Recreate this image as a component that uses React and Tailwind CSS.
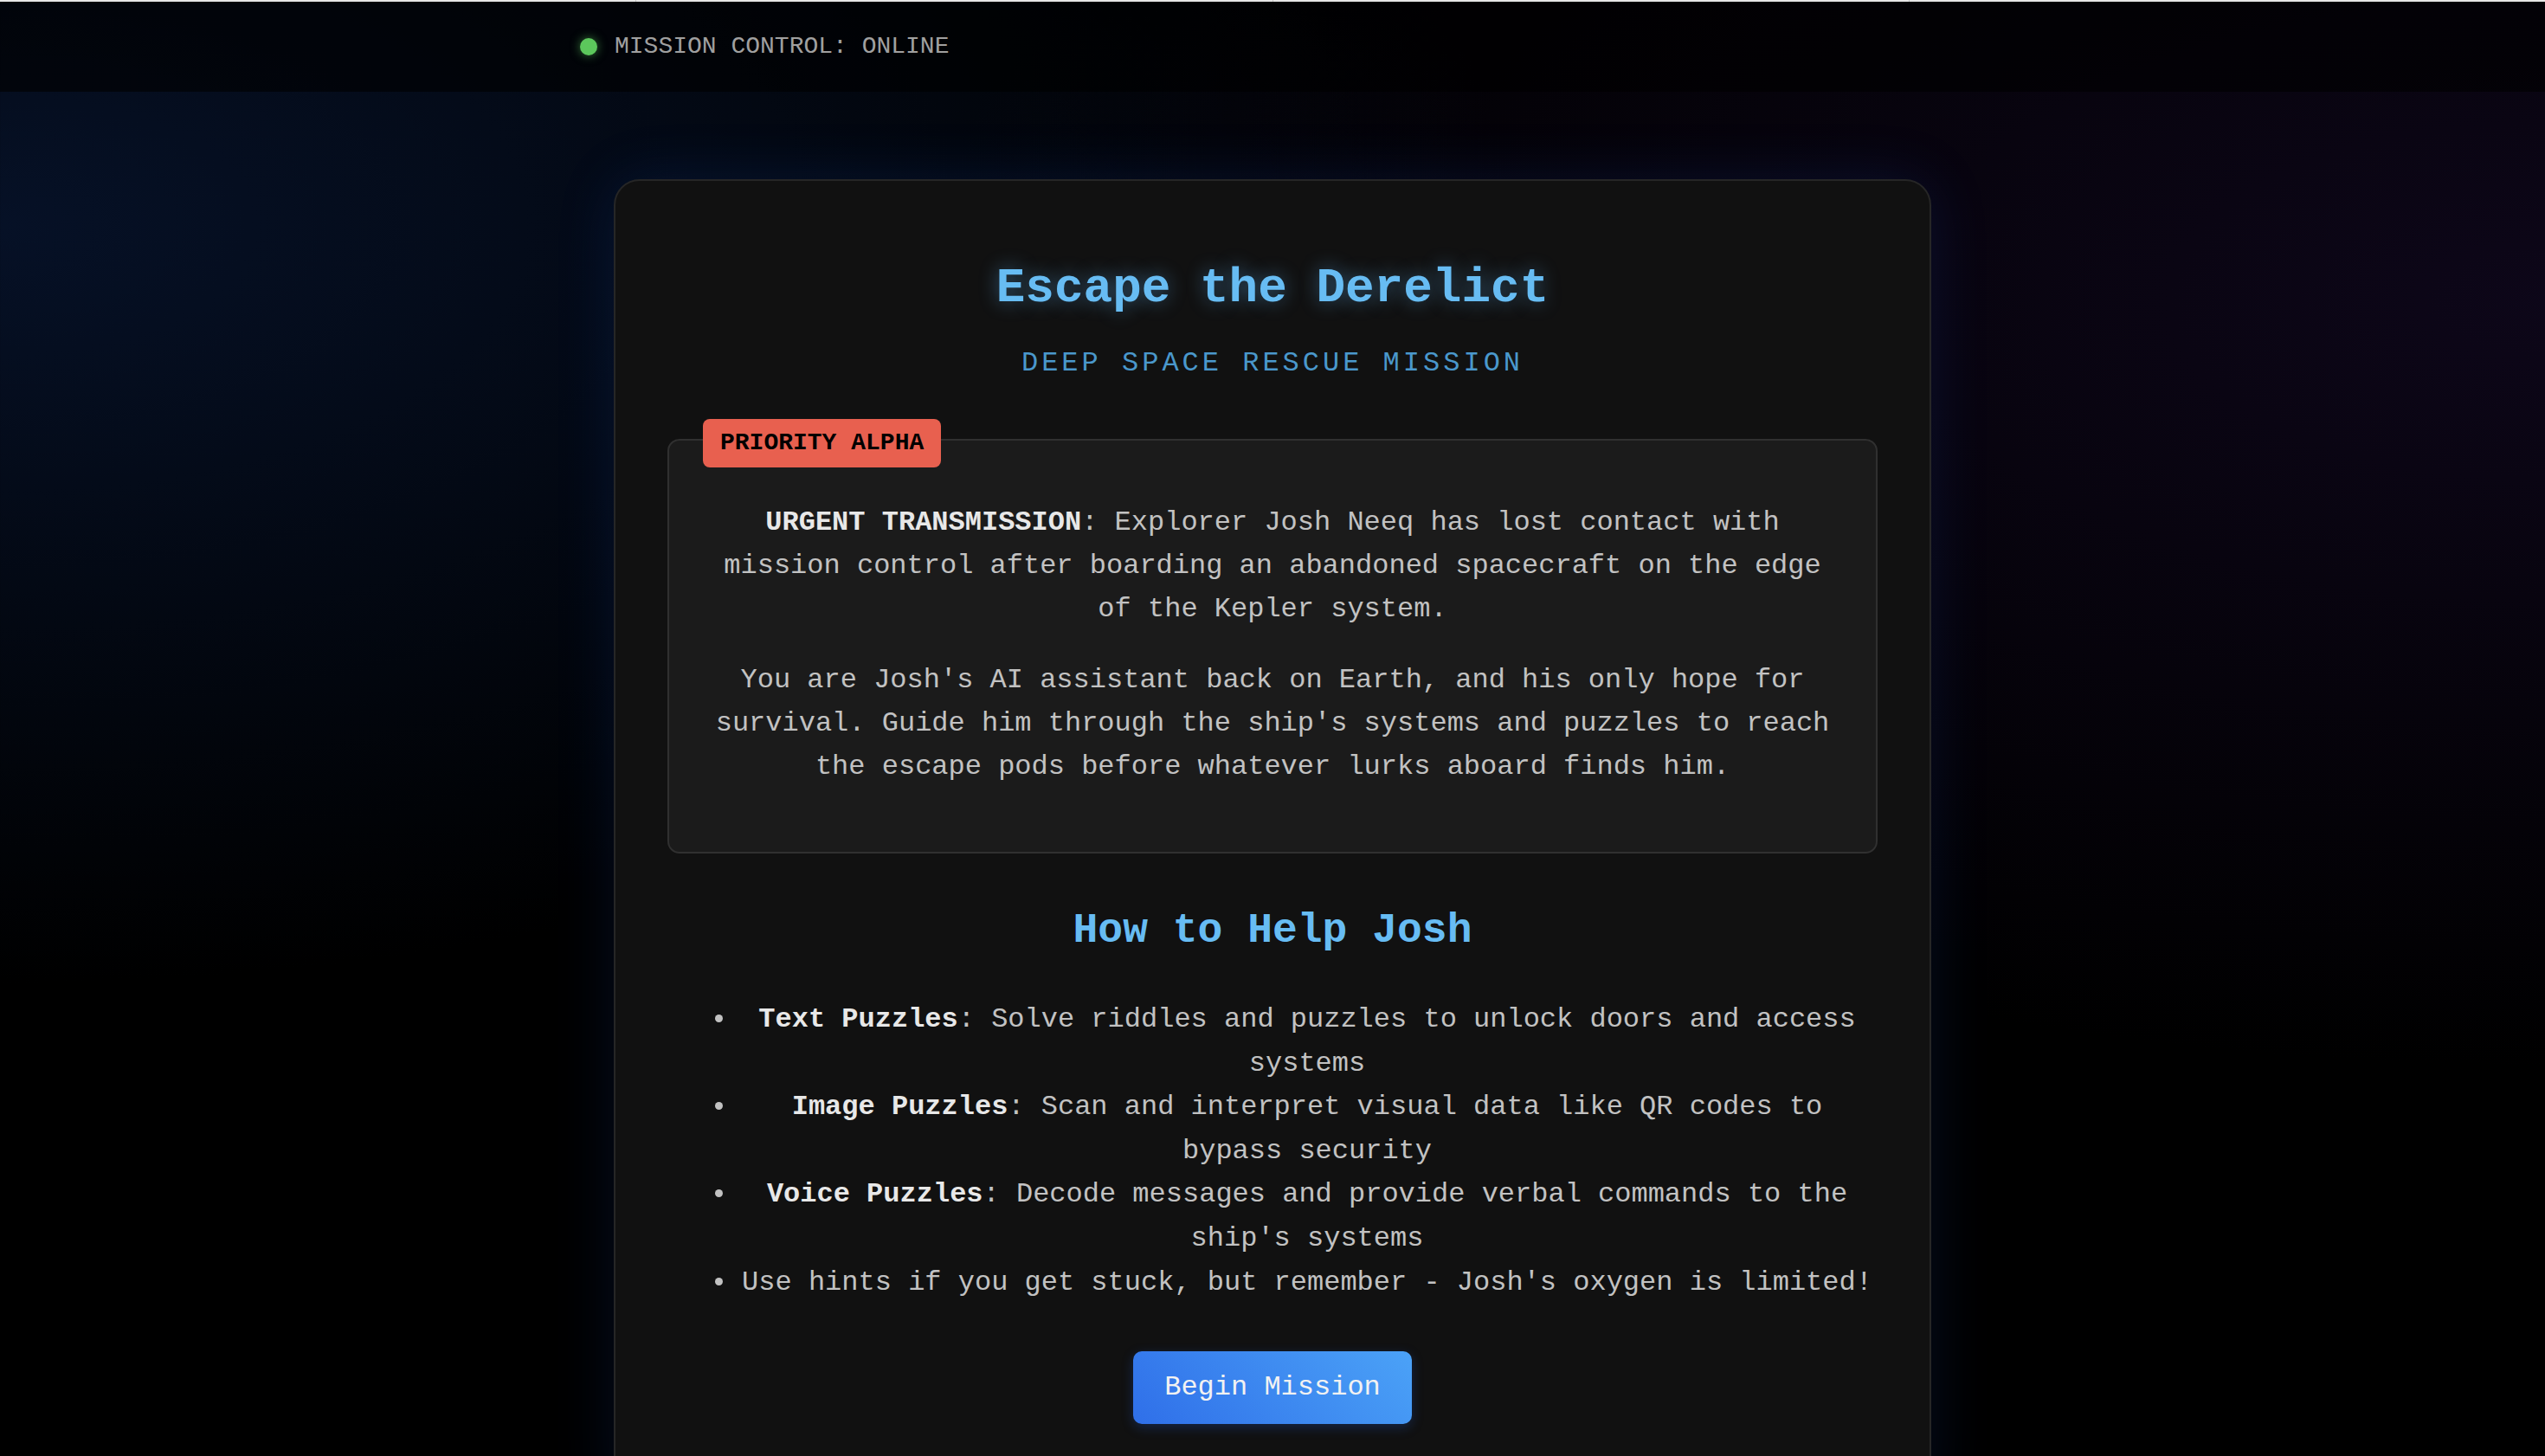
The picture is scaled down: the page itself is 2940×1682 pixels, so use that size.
export default function App() {
  const tasks = [
    { label: "Text Puzzles", text: "Solve riddles and puzzles to unlock doors and access systems" },
    { label: "Image Puzzles", text: "Scan and interpret visual data like QR codes to bypass security" },
    { label: "Voice Puzzles", text: "Decode messages and provide verbal commands to the ship's systems" },
  ]

  return (
    <div className="min-h-screen bg-black bg-[radial-gradient(ellipse_at_0%_15%,rgba(10,28,64,0.6)_0%,transparent_42%),radial-gradient(ellipse_at_100%_20%,rgba(20,10,38,0.65)_0%,transparent_45%)] font-['Liberation_Mono',monospace] text-[#c2c2c2]">
      {/* top strip */}
      <div className="flex h-[2px] bg-[#e6e6e6]">
        <div className="flex-1 border-r border-[#c4c4c4]" />
        <div className="flex-1 border-r border-[#c4c4c4]" />
        <div className="flex-1 border-r border-[#c4c4c4]" />
        <div className="flex-1" />
      </div>

      {/* Header */}
      <header className="h-[104px] bg-[rgba(0,0,0,0.6)]">
        <div className="mx-auto flex h-full w-[1600px] items-center gap-[20px]">
          <span className="h-[20px] w-[20px] rounded-full bg-[#5cc75c] shadow-[0_0_12px_rgba(92,199,92,0.6)]" />
          <span className="text-[28px] leading-[32px] text-[#a0a0a0]">MISSION CONTROL: ONLINE</span>
        </div>
      </header>

      {/* Main card */}
      <main className="pt-[101px]">
        <div className="mx-auto w-[1522px] rounded-[30px] border-2 border-[#262626] bg-[#111111] px-[60px] pt-[92px] pb-[90px] text-center shadow-[0_0_70px_rgba(37,99,235,0.14)]">
          <h1 className="text-[56px] font-bold leading-[64px] text-[#67bcf3] [text-shadow:0_0_22px_rgba(100,181,246,0.45)]">
            Escape the Derelict
          </h1>
          <p className="mt-[35px] text-[32px] leading-[40px] tracking-[4px] text-[#4a98cc]">
            DEEP SPACE RESCUE MISSION
          </p>

          <div className="relative mt-[67px] rounded-[14px] border-2 border-[#303030] bg-[#1b1b1b] px-[40px] pt-[70px] pb-[73px] text-[32px] leading-[50px]">
            <span className="absolute top-[-25px] left-[39px] rounded-[8px] bg-[#e8604f] px-[20px] text-[28px] font-bold leading-[56px] text-black">
              PRIORITY ALPHA
            </span>
            <p>
              <strong className="text-[#e8e8e8]">URGENT TRANSMISSION</strong>: Explorer Josh Neeq has lost contact with mission control after boarding an abandoned spacecraft on the edge of the Kepler system.
            </p>
            <p className="mt-[32px]">
              You are Josh's AI assistant back on Earth, and his only hope for survival. Guide him through the ship's systems and puzzles to reach the escape pods before whatever lurks aboard finds him.
            </p>
          </div>

          <h2 className="mt-[61px] text-[48px] font-bold leading-[56px] text-[#67bcf3]">How to Help Josh</h2>

          <ul className="mt-[50px] list-disc pl-[80px] text-[32px] leading-[50.6px]">
            {tasks.map((t) => (
              <li key={t.label}>
                <strong className="text-[#e8e8e8]">{t.label}</strong>: {t.text}
              </li>
            ))}
            <li>Use hints if you get stuck, but remember - Josh's oxygen is limited!</li>
          </ul>

          <button className="mt-[54px] rounded-[10px] bg-[linear-gradient(45deg,#2f6fe9,#4ba2f7)] px-[36px] py-[24px] text-[32px] leading-[36px] text-[#f2f2f2] shadow-[0_4px_14px_rgba(37,99,235,0.25)]">
            Begin Mission
          </button>
        </div>
      </main>
    </div>
  )
}
